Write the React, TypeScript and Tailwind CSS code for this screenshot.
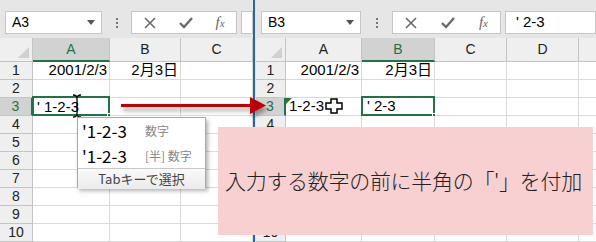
import React from 'react';

type Col = { label: string; w: string; sel?: boolean };

const FONT = "font-['Liberation_Sans','Noto_Sans_CJK_JP',sans-serif]";

function XIcon() {
  return (
    <svg width="12" height="12" viewBox="0 0 12 12">
      <path d="M1 1 L11 11 M11 1 L1 11" stroke="#6b6b6b" strokeWidth="1.6" fill="none" />
    </svg>
  );
}

function CheckIcon() {
  return (
    <svg width="14" height="12" viewBox="0 0 14 12">
      <path d="M1 6 L5 10 L13 1" stroke="#6b6b6b" strokeWidth="2.4" fill="none" />
    </svg>
  );
}

function FormulaBar({ name, value, nameW, btnW }: { name: string; value?: string; nameW: string; btnW: string }) {
  return (
    <div className="h-[38px] flex items-start pt-[11px] pl-[5px] bg-[#e6e6e6]">
      <div className={`${nameW} h-[23px] bg-white border border-[#c6c6c6] flex items-center justify-between pl-[6px] pr-[6px]`}>
        <span className="text-[14px] text-black">{name}</span>
        <svg width="8" height="5" viewBox="0 0 8 5">
          <path d="M0 0 L8 0 L4 5 Z" fill="#555" />
        </svg>
      </div>
      <div className="w-[31px] h-[23px] flex items-center justify-center">
        <div className="flex flex-col gap-[2px]">
          <div className="w-[2px] h-[2px] bg-[#777]" />
          <div className="w-[2px] h-[2px] bg-[#777]" />
          <div className="w-[2px] h-[2px] bg-[#777]" />
        </div>
      </div>
      <div className={`${btnW} h-[23px] bg-white border border-[#c6c6c6] flex items-center justify-around`}>
        <XIcon />
        <CheckIcon />
        <span className="font-['Liberation_Serif',serif] italic text-[15px] text-[#666] leading-none">
          f<span className="text-[11px]">x</span>
        </span>
      </div>
      <div className="ml-[4px] flex-1 h-[23px] bg-white border border-[#c6c6c6] flex items-center pl-[10px] text-[15px] text-black whitespace-pre">
        {value}
      </div>
    </div>
  );
}

function HeaderRow({ cols, headW, strip }: { cols: Col[]; headW: string; strip?: boolean }) {
  return (
    <div className="flex h-[24px]">
      {strip && <div className="w-[2px] bg-[#e6e6e6]" />}
      <div className={`${headW} shrink-0 bg-[#efefef] border-r border-b border-[#c4c4c4] relative`}>
        <svg className="absolute right-[3px] bottom-[3px]" width="11" height="11" viewBox="0 0 11 11">
          <path d="M11 0 L11 11 L0 11 Z" fill="#d0d0d0" />
        </svg>
      </div>
      {cols.map((c) => (
        <div
          key={c.label}
          className={`${c.w} shrink-0 flex items-center justify-center text-[14px] border-r ${
            c.sel
              ? 'bg-[#d2d2d2] text-[#217346] border-b-2 border-b-[#217346] border-r-[#c4c4c4]'
              : 'bg-[#efefef] text-[#222] border-b border-[#c4c4c4]'
          }`}
        >
          {c.label}
        </div>
      ))}
    </div>
  );
}

function Row({
  n,
  cols,
  headW,
  strip,
  sel,
  cells,
}: {
  n: number;
  cols: Col[];
  headW: string;
  strip?: boolean;
  sel?: boolean;
  cells: (React.ReactNode | null)[];
}) {
  return (
    <div className="flex h-[18px]">
      {strip && <div className="w-[2px] bg-[#e6e6e6]" />}
      <div
        className={`${headW} shrink-0 flex items-center justify-center text-[14px] border-r border-b ${
          sel ? 'bg-[#d2d2d2] text-[#217346] border-r-2 border-r-[#217346] border-b-[#c4c4c4]' : 'bg-[#efefef] text-[#222] border-[#c4c4c4]'
        }`}
      >
        {n}
      </div>
      {cols.map((c, i) => (
        <div key={c.label} className={`${c.w} shrink-0 relative bg-white border-r border-b border-[#dadada]`}>
          {cells[i]}
        </div>
      ))}
    </div>
  );
}

function Selection() {
  return (
    <div className="absolute -left-[1px] -top-[2px] -right-[1px] -bottom-[1px] border-2 border-[#217346] pointer-events-none">
      <div className="absolute -right-[4px] -bottom-[4px] w-[5px] h-[5px] bg-[#217346] border border-white" />
    </div>
  );
}

const Right = ({ children }: { children: React.ReactNode }) => (
  <div className="absolute inset-0 flex items-center justify-end pr-[2px] text-[15px] text-black whitespace-nowrap">{children}</div>
);

const leftCols: Col[] = [
  { label: 'A', w: 'w-[77px]', sel: true },
  { label: 'B', w: 'w-[71px]' },
  { label: 'C', w: 'w-[72px]' },
];

const rightCols: Col[] = [
  { label: 'A', w: 'w-[76px]' },
  { label: 'B', w: 'w-[73px]', sel: true },
  { label: 'C', w: 'w-[72px]' },
  { label: 'D', w: 'w-[72px]' },
  { label: '', w: 'w-[30px]' },
];

const rows = [1, 2, 3, 4, 5, 6, 7, 8, 9, 10];

function LeftSheet() {
  return (
    <div className="w-[253px] shrink-0 overflow-hidden">
      <FormulaBar name="A3" nameW="w-[101px]" btnW="w-[111px]" />
      <HeaderRow cols={leftCols} headW="w-[33px]" />
      {rows.map((n) => {
        let cells: (React.ReactNode | null)[] = [];
        if (n === 1) cells = [<Right key="a">2001/2/3</Right>, <Right key="b">2月3日</Right>];
        if (n === 3)
          cells = [
            <React.Fragment key="a">
              <div className="absolute inset-0 flex items-center pl-[4px] text-[15px] text-black">
                <span className="border-b border-dotted border-black leading-[15px] whitespace-pre">' 1-2-3</span>
              </div>
              <Selection />
            </React.Fragment>,
          ];
        return <Row key={n} n={n} cols={leftCols} headW="w-[33px]" sel={n === 3} cells={cells} />;
      })}
    </div>
  );
}

function RightSheet() {
  return (
    <div className="flex-1 overflow-hidden">
      <FormulaBar name="B3" value="' 2-3" nameW="w-[100px]" btnW="w-[109px]" />
      <HeaderRow cols={rightCols} headW="w-[30px]" strip />
      {rows.map((n) => {
        let cells: (React.ReactNode | null)[] = [];
        if (n === 1) cells = [<Right key="a">2001/2/3</Right>, <Right key="b">2月3日</Right>];
        if (n === 3)
          cells = [
            <React.Fragment key="a">
              <div className="absolute left-0 top-0 w-0 h-0 border-t-[6px] border-r-[6px] border-t-[#217346] border-r-transparent" />
              <div className="absolute inset-0 flex items-center pl-[3px] text-[15px] text-black">1-2-3</div>
            </React.Fragment>,
            <React.Fragment key="b">
              <div className="absolute inset-0 flex items-center pl-[5px] text-[15px] text-black whitespace-pre">' 2-3</div>
              <Selection />
            </React.Fragment>,
          ];
        return <Row key={n} n={n} cols={rightCols} headW="w-[30px]" strip sel={n === 3} cells={cells} />;
      })}
    </div>
  );
}

export default function App() {
  return (
    <div className={`relative w-[596px] h-[242px] overflow-hidden bg-white ${FONT}`}>
      <div className="flex h-full">
        <LeftSheet />
        <div className="w-[2px] shrink-0 bg-[#2566b0]" />
        <div className="w-[1px] shrink-0 bg-[#e6e6e6]" />
        <RightSheet />
      </div>

      {/* arrow */}
      <svg className="absolute left-[118px] top-[94px]" width="152" height="24" viewBox="0 0 152 24">
        <defs>
          <filter id="sh" x="-10%" y="-50%" width="120%" height="200%">
            <feDropShadow dx="2" dy="4" stdDeviation="2" floodColor="#000" floodOpacity="0.35" />
          </filter>
        </defs>
        <g filter="url(#sh)">
          <rect x="3" y="10" width="132" height="3" fill="#c00000" />
          <path d="M132 3 L148 11.5 L132 20 Z" fill="#c00000" />
        </g>
      </svg>

      {/* I-beam cursor */}
      <svg className="absolute left-[72px] top-[94px]" width="10" height="24" viewBox="0 0 10 24">
        <path d="M1 1 Q5 1 5 4 Q5 1 9 1 M5 4 L5 20 M1 23 Q5 23 5 20 Q5 23 9 23" stroke="#000" strokeWidth="1.3" fill="none" />
      </svg>

      {/* cross cursor */}
      <svg className="absolute left-[325px] top-[98px]" width="18" height="16" viewBox="0 0 18 16">
        <path d="M6 1 H12 V5 H17 V11 H12 V15 H6 V11 H1 V5 H6 Z" fill="#fff" stroke="#000" strokeWidth="1.5" />
      </svg>

      {/* autocomplete popup */}
      <div className="absolute left-[77px] top-[117px] w-[129px] h-[71px] bg-white border border-[#a8a8a8] shadow-[2px_3px_4px_rgba(0,0,0,0.3)] flex flex-col">
        <div className="h-[25px] flex items-center pl-[4px]">
          <span className="w-[63px] text-[17px] text-black font-['Noto_Sans_CJK_JP',sans-serif]">'1-2-3</span>
          <span className="text-[12px] text-[#888] font-['Noto_Sans_CJK_JP',sans-serif]">数字</span>
        </div>
        <div className="h-[25px] flex items-center pl-[4px]">
          <span className="w-[63px] text-[17px] text-black font-['Noto_Sans_CJK_JP',sans-serif]">'1-2-3</span>
          <span className="text-[12px] text-[#888] font-['Noto_Sans_CJK_JP',sans-serif]">[半] 数字</span>
        </div>
        <div className="flex-1 border-t border-[#c8c8c8] bg-gradient-to-b from-[#fafafa] to-[#ebebeb] flex items-center justify-center text-[13px] text-[#444] font-['Noto_Sans_CJK_JP',sans-serif]">
          Tabキーで選択
        </div>
      </div>

      {/* note */}
      <div className="absolute left-[218px] top-[127px] w-[375px] h-[108px] bg-[#f8d0d1] flex items-center pl-[7px]">
        <span className="text-[21px] text-[#222] font-['Noto_Sans_CJK_JP',sans-serif] font-light tracking-[-0.3px] whitespace-nowrap">
          入力する数字の前に半角の「'」を付加
        </span>
      </div>
    </div>
  );
}
